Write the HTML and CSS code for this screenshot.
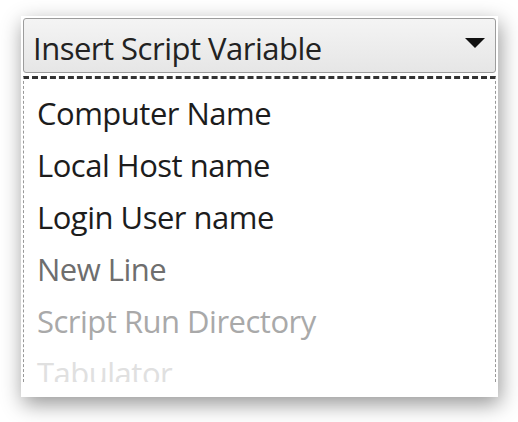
FILE: index.html
```html
<!DOCTYPE html>
<html lang="en">
<head>
    <meta charset="UTF-8">
    <meta name="viewport" content="width=device-width, initial-scale=1.0">
    <title>Insert Script Variable</title>
    <link rel="stylesheet" href="styles.css">
</head>
<body>

<div class="card">
    <!-- combo box header -->
    <div class="combo">
        <span class="combo-label">Insert Script Variable</span>
        <svg class="combo-arrow" width="20" height="10" viewBox="0 0 20 10">
            <polygon points="0,0 20,0 10,10" fill="#111"/>
        </svg>
    </div>

    <!-- open drop-down list -->
    <ul class="list">
        <li class="item">Computer Name</li>
        <li class="item">Local Host name</li>
        <li class="item">Login User name</li>
        <li class="item fade-1">New Line</li>
        <li class="item fade-2">Script Run Directory</li>
        <li class="item fade-3">Tabulator</li>
    </ul>
</div>

</body>
</html>
```

FILE: styles.css
```css
html, body {
    height: 100%;
}
body {
    margin: 0;
    padding: 16px 0 0 21px;
    box-sizing: border-box;
    min-height: 422px;
    background-color: #fff;
    font-family: 'Open Sans', 'Noto Sans', sans-serif;
}
.card {
    width: 473px;
    height: 377px;
    padding: 2px;
    background-color: #fff;
    box-shadow: 2px 7px 20px rgba(0, 0, 0, 0.42);
}
.combo {
    height: 53px;
    border: 1px solid #9c9c9c;
    border-radius: 3px;
    background: linear-gradient(#f4f4f4, #e6e6e6);
    display: flex;
    align-items: center;
    justify-content: space-between;
    padding: 0 10px 0 9px;
}
.combo-label {
    font-size: 31px;
    letter-spacing: -0.5px;
    color: #222;
    line-height: 1;
    margin-top: 5px;
}
.combo-arrow {
    margin-top: -6px;
}
.list {
    list-style: none;
    margin: 3px 0 0 0;
    padding: 8px 0 0 13px;
    height: 295px;
    overflow: hidden;
    border-top: 3px dashed #333;
    border-left: 1px dashed #999;
    border-right: 1px dashed #999;
}
.item {
    font-size: 31px;
    letter-spacing: -0.5px;
    line-height: 52px;
    color: #1c1c1c;
    white-space: nowrap;
}
.fade-1 {
    color: #6e6e6e;
}
.fade-2 {
    color: #a9a9a9;
}
.fade-3 {
    color: #e0e0e0;
}
```
